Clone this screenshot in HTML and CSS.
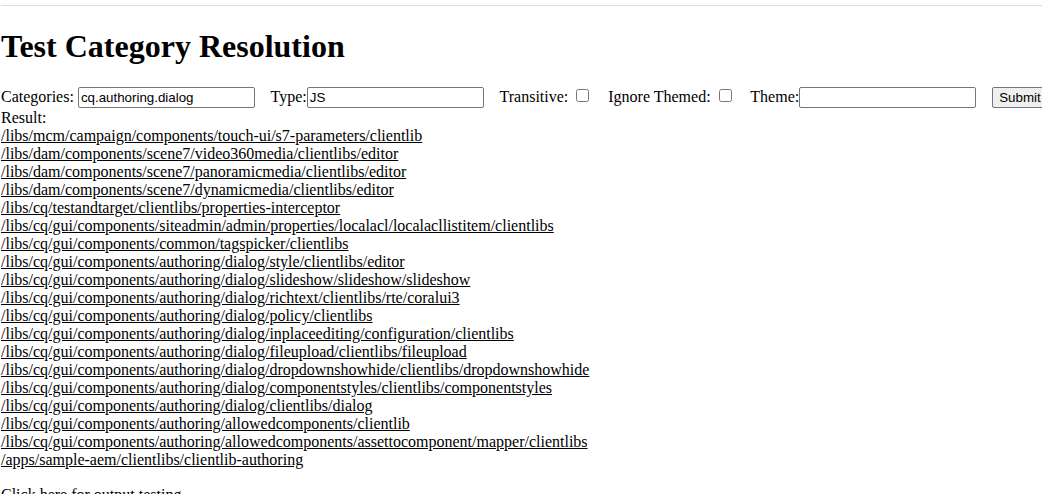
FILE: index.html
```html
<!DOCTYPE html>
<html>
<head>
<meta charset="utf-8">
<title>Test Category Resolution</title>
<link rel="stylesheet" href="styles.css">
</head>
<body>
<div class="topline"></div>
<h1 class="title">Test Category Resolution</h1>
<form class="query">
  <label class="field">Categories: <input class="text" type="text" value="cq.authoring.dialog"></label>
  <label class="field">Type:<input class="text" type="text" value="JS"></label>
  <label class="field">Transitive: <input class="check" type="checkbox"></label>
  <label class="field">Ignore Themed: <input class="check" type="checkbox"></label>
  <label class="field">Theme:<input class="text" type="text" value=""></label>
  <button class="submit" type="button">Submit</button>
</form>
<div class="result-label">Result:</div>
<div class="results">
  <a class="result" href="#">/libs/mcm/campaign/components/touch-ui/s7-parameters/clientlib</a>
  <a class="result" href="#">/libs/dam/components/scene7/video360media/clientlibs/editor</a>
  <a class="result" href="#">/libs/dam/components/scene7/panoramicmedia/clientlibs/editor</a>
  <a class="result" href="#">/libs/dam/components/scene7/dynamicmedia/clientlibs/editor</a>
  <a class="result" href="#">/libs/cq/testandtarget/clientlibs/properties-interceptor</a>
  <a class="result" href="#">/libs/cq/gui/components/siteadmin/admin/properties/localacl/localacllistitem/clientlibs</a>
  <a class="result" href="#">/libs/cq/gui/components/common/tagspicker/clientlibs</a>
  <a class="result" href="#">/libs/cq/gui/components/authoring/dialog/style/clientlibs/editor</a>
  <a class="result" href="#">/libs/cq/gui/components/authoring/dialog/slideshow/slideshow/slideshow</a>
  <a class="result" href="#">/libs/cq/gui/components/authoring/dialog/richtext/clientlibs/rte/coralui3</a>
  <a class="result" href="#">/libs/cq/gui/components/authoring/dialog/policy/clientlibs</a>
  <a class="result" href="#">/libs/cq/gui/components/authoring/dialog/inplaceediting/configuration/clientlibs</a>
  <a class="result" href="#">/libs/cq/gui/components/authoring/dialog/fileupload/clientlibs/fileupload</a>
  <a class="result" href="#">/libs/cq/gui/components/authoring/dialog/dropdownshowhide/clientlibs/dropdownshowhide</a>
  <a class="result" href="#">/libs/cq/gui/components/authoring/dialog/componentstyles/clientlibs/componentstyles</a>
  <a class="result" href="#">/libs/cq/gui/components/authoring/dialog/clientlibs/dialog</a>
  <a class="result" href="#">/libs/cq/gui/components/authoring/allowedcomponents/clientlib</a>
  <a class="result" href="#">/libs/cq/gui/components/authoring/allowedcomponents/assettocomponent/mapper/clientlibs</a>
  <a class="result" href="#">/apps/sample-aem/clientlibs/clientlib-authoring</a>
</div>
<p class="footer-link">Click here for output testing</p>
</body>
</html>
```
FILE: styles.css
```css
html {
  overflow: hidden;
}
body {
  margin: 0 0 0 1px;
  font-family: "Liberation Serif", "Times New Roman", serif;
  font-size: 16px;
  color: #000;
  background: #fff;
}
.topline {
  margin: 5px -1px 0 -1px;
  height: 1px;
  border-top: 1px solid #dcdcdc;
}
.title {
  font-size: 32px;
  font-weight: bold;
  margin: 21px 0 20px 0;
  line-height: 37px;
}
.query {
  white-space: nowrap;
  width: 1100px;
  line-height: 22px;
  padding-top: 1px;
  margin-bottom: 1px;
}
.field {
  margin-right: 12px;
}
.text {
  font-family: "Liberation Sans", Arial, sans-serif;
  font-size: 13.333px;
  width: 177px;
  height: 21px;
  box-sizing: border-box;
  padding: 1px 2px;
  border: 1px solid #767676;
  border-radius: 2px;
  color: #000;
  vertical-align: baseline;
}
.check {
  width: 13px;
  height: 13px;
  margin: 3px 3px 3px 4px;
  vertical-align: baseline;
}
.submit {
  font-family: "Liberation Sans", Arial, sans-serif;
  font-size: 13.333px;
  padding: 1px 6px;
  height: 21px;
  border: 1px solid #767676;
  border-radius: 2px;
  background: #efefef;
  color: #000;
}
.result-label {
  line-height: 18px;
}
.results {
  display: flex;
  flex-direction: column;
  align-items: flex-start;
  line-height: 18px;
}
.result {
  color: #000;
  text-decoration: underline;
}
.footer-link {
  margin: 17px 0 0 0;
  line-height: 18px;
}
```
